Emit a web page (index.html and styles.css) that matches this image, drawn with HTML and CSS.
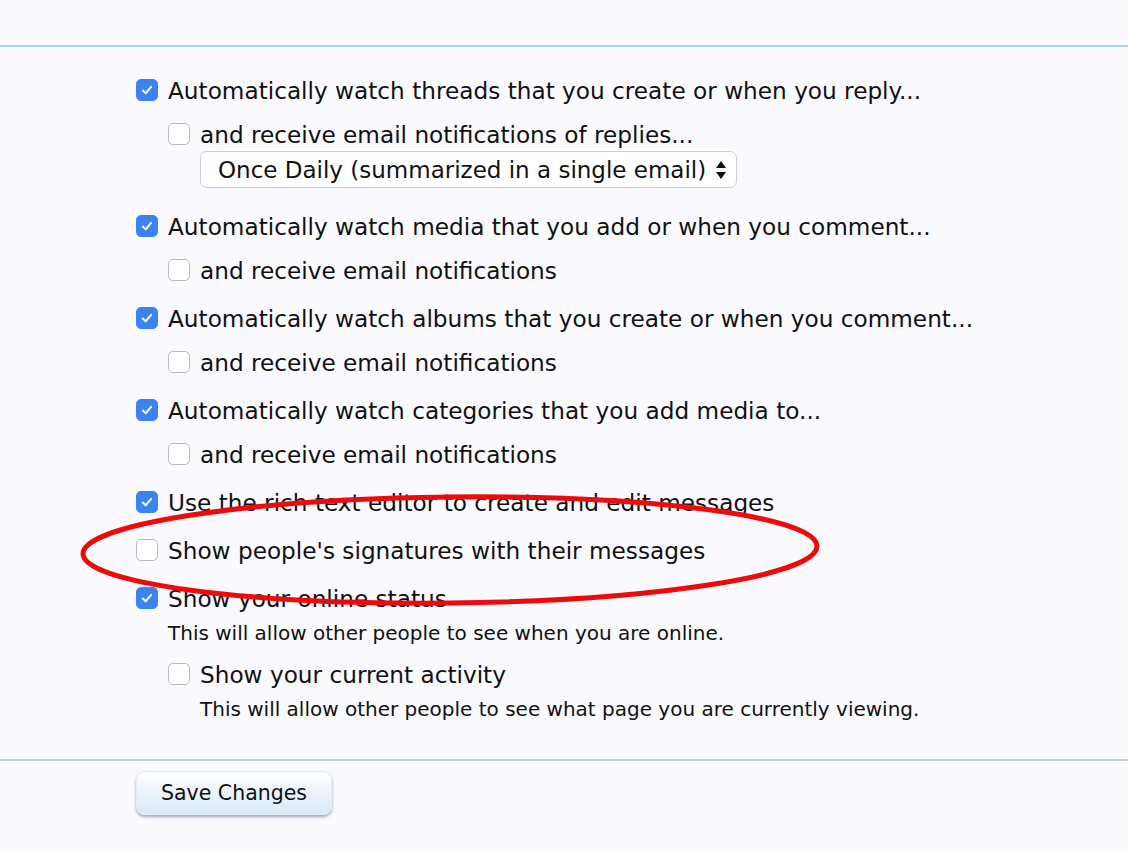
FILE: index.html
```html
<!DOCTYPE html>
<html lang="en">
<head>
<meta charset="utf-8">
<title>Preferences</title>
<link rel="stylesheet" href="styles.css">
</head>
<body>
<div class="page">
  <div class="rule"></div>
  <ul class="opts">
    <li class="item">
      <div class="row"><span class="cb on"><svg viewBox="0 0 22 22"><path d="M6.5 11.5l3 3.2 6-7.2"/></svg></span><span>Automatically watch threads that you create or when you reply...</span></div>
      <ul class="sub">
        <li class="item with-select">
          <div class="row"><span class="cb"></span><span>and receive email notifications of replies...</span></div>
          <div class="select"><span>Once Daily (summarized in a single email)</span><svg class="arr" viewBox="0 0 12 22"><path d="M6 2l5 7H1z M6 20l5-7H1z"/></svg></div>
        </li>
      </ul>
    </li>
    <li class="item">
      <div class="row"><span class="cb on"><svg viewBox="0 0 22 22"><path d="M6.5 11.5l3 3.2 6-7.2"/></svg></span><span>Automatically watch media that you add or when you comment...</span></div>
      <ul class="sub">
        <li class="item"><div class="row"><span class="cb"></span><span>and receive email notifications</span></div></li>
      </ul>
    </li>
    <li class="item">
      <div class="row"><span class="cb on"><svg viewBox="0 0 22 22"><path d="M6.5 11.5l3 3.2 6-7.2"/></svg></span><span>Automatically watch albums that you create or when you comment...</span></div>
      <ul class="sub">
        <li class="item"><div class="row"><span class="cb"></span><span>and receive email notifications</span></div></li>
      </ul>
    </li>
    <li class="item">
      <div class="row"><span class="cb on"><svg viewBox="0 0 22 22"><path d="M6.5 11.5l3 3.2 6-7.2"/></svg></span><span>Automatically watch categories that you add media to...</span></div>
      <ul class="sub">
        <li class="item"><div class="row"><span class="cb"></span><span>and receive email notifications</span></div></li>
      </ul>
    </li>
    <li class="item">
      <div class="row"><span class="cb on"><svg viewBox="0 0 22 22"><path d="M6.5 11.5l3 3.2 6-7.2"/></svg></span><span>Use the rich text editor to create and edit messages</span></div>
    </li>
    <li class="item">
      <div class="row"><span class="cb"></span><span>Show people's signatures with their messages</span></div>
    </li>
    <li class="item">
      <div class="row"><span class="cb on"><svg viewBox="0 0 22 22"><path d="M6.5 11.5l3 3.2 6-7.2"/></svg></span><span>Show your online status</span></div>
      <p class="hint">This will allow other people to see when you are online.</p>
      <ul class="sub">
        <li class="item">
          <div class="row"><span class="cb"></span><span>Show your current activity</span></div>
          <p class="hint">This will allow other people to see what page you are currently viewing.</p>
        </li>
      </ul>
    </li>
  </ul>
  <div class="rule rule2"></div>
  <div class="actions"><button class="btn" type="button">Save Changes</button></div>
  <svg class="circle" viewBox="0 0 760 130"><ellipse cx="372" cy="57" rx="367" ry="53" transform="rotate(-0.6 372 57)"/></svg>
</div>
</body>
</html>
```
FILE: styles.css
```css
html, body {
  margin: 0;
  padding: 0;
  background: #f9f9fe;
}
body {
  font-family: "DejaVu Sans", sans-serif;
  color: #111;
}
.page {
  position: relative;
  width: 1128px;
  height: 852px;
  overflow: hidden;
  padding-top: 45px;
  box-sizing: border-box;
}
.rule {
  height: 2px;
  background: #acd3e1;
}
.opts, .sub {
  list-style: none;
  margin: 0;
  padding: 0;
}
.opts {
  padding: 29px 0 0 136px;
}
.opts > .item {
  margin-bottom: 20px;
}
.opts > .item:last-child {
  margin-bottom: 0;
}
.sub {
  margin-top: 16px;
  padding-left: 32px;
}
.with-select {
  padding-bottom: 4px;
}
.row {
  display: flex;
  align-items: center;
  gap: 10px;
  height: 28px;
  font-size: 23.2px;
  white-space: nowrap;
}
.cb {
  flex: none;
  width: 22px;
  height: 22px;
  box-sizing: border-box;
  border-radius: 5px;
  border: 1px solid #b9b9b9;
  background: #fff;
  display: flex;
}
.cb.on {
  background: #3b82f2;
  border-color: #3b82f2;
}
.cb svg {
  width: 20px;
  height: 20px;
  fill: none;
  stroke: #fff;
  stroke-width: 2.2;
  stroke-linecap: round;
  stroke-linejoin: round;
}
.select {
  margin: 3px 0 0 32px;
  width: 537px;
  height: 37px;
  box-sizing: border-box;
  border: 1px solid #cfcfcf;
  border-radius: 7px;
  background: #fff;
  display: flex;
  align-items: center;
  justify-content: space-between;
  padding: 0 9px 0 17px;
  font-size: 23px;
  white-space: nowrap;
}
.arr {
  width: 12px;
  height: 22px;
  fill: #111;
}
.hint {
  margin: 10px 0 0 32px;
  font-size: 20px;
  line-height: 22px;
  white-space: nowrap;
}
.sub .hint {
  margin-top: 10px;
}
.opts > .item > .hint + .sub {
  margin-top: 16px;
}
.rule2 {
  margin-top: 39px;
}
.actions {
  padding: 10px 0 0 136px;
}
.btn {
  width: 196px;
  height: 44px;
  border: 1px solid #e3edf5;
  border-radius: 9px;
  background: linear-gradient(#ffffff, #eaf3fa 50%, #d8e9f5);
  box-shadow: 0 2px 3px rgba(90, 100, 130, 0.55);
  font-family: inherit;
  font-size: 20.5px;
  color: #111;
  padding: 0;
}
.circle {
  position: absolute;
  left: 78px;
  top: 493px;
  width: 760px;
  height: 130px;
  overflow: visible;
}
.circle ellipse {
  fill: none;
  stroke: #ee0a0a;
  stroke-width: 5;
}
```
